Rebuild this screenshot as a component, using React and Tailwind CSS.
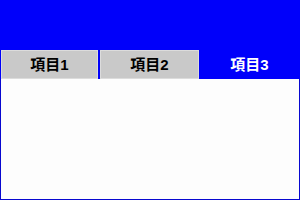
export default function App() {
  const font = { fontFamily: '"Liberation Sans", "Noto Sans CJK JP", sans-serif' };
  return (
    <div className="w-[300px] h-[200px] bg-[#0000fa] flex flex-col overflow-hidden" style={font}>
      <div className="h-[50px] shrink-0" />
      <div className="h-[29px] shrink-0 flex">
        <div className="ml-[1px] w-[97px] bg-[#c9c9c9] border border-[#dcdcdc] flex items-center justify-center text-[15px] leading-none font-bold text-black">
          項目1
        </div>
        <div className="ml-[2px] w-[99px] bg-[#c9c9c9] border border-[#dcdcdc] flex items-center justify-center text-[15px] leading-none font-bold text-black">
          項目2
        </div>
        <div className="flex-1 flex items-center justify-center text-[15px] leading-none font-bold text-white">
          項目3
        </div>
      </div>
      <div className="flex-1 bg-[#fdfdfd] border-l border-r border-b border-[#0808d0]" />
    </div>
  );
}
